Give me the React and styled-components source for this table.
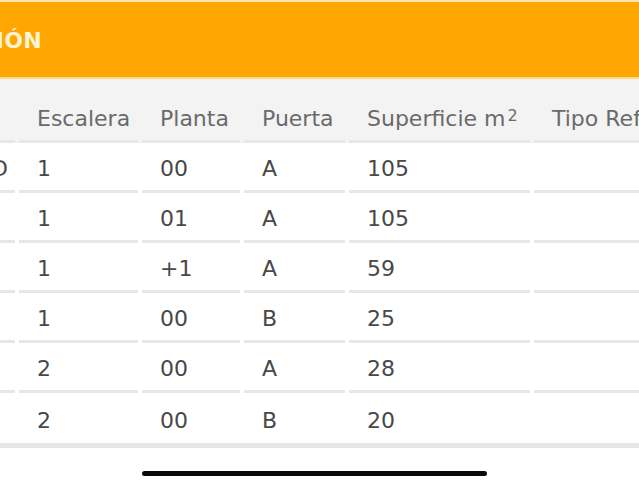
import React from "react";
import styled, { createGlobalStyle } from "styled-components";

const Global = createGlobalStyle`
  html, body {
    margin: 0;
    padding: 0;
    background: #ffffff;
    overflow: hidden;
    width: 639px;
    height: 480px;
  }
  body {
    font-family: "DejaVu Sans", Verdana, sans-serif;
  }
`;

const Page = styled.div`
  width: 639px;
  height: 480px;
  overflow: hidden;
  display: flex;
  flex-direction: column;
  background: #ffffff;
`;

const TitleBar = styled.div`
  height: 79px;
  background: #ffa602;
  border-top: 2px solid #fde6ad;
  border-bottom: 2px solid #fcd98f;
  display: flex;
  align-items: center;
  padding-top: 2px;
  box-sizing: border-box;
  flex-shrink: 0;
`;

const TitleClip = styled.div`
  width: 42px;
  display: flex;
  justify-content: flex-end;
  flex-shrink: 0;
`;

const Title = styled.span`
  font-family: "DejaVu Sans", Verdana, sans-serif;
  font-weight: bold;
  font-size: 22px;
  color: #fff4d2;
  white-space: nowrap;
  letter-spacing: 0.3px;
`;

const Spacer = styled.div`
  height: 9px;
  flex-shrink: 0;
  background: #f1f4f1;
`;

const Table = styled.div`
  display: flex;
  flex-direction: column;
  margin-left: -27px;
  width: 800px;
  border-bottom: 5px solid #e6e6e6;
`;

const cols = "42px 119px 98px 101px 181px 215px";

const Row = styled.div`
  display: grid;
  grid-template-columns: ${cols};
  column-gap: 4px;
  background: ${(p) => (p.$head ? "#f3f3f3" : "#ffffff")};
`;

const Cell = styled.div`
  box-sizing: border-box;
  height: ${(p) => (p.$head ? "55px" : "50px")};
  padding: ${(p) => (p.$head ? "9px 18px 0" : "4px 18px 0")};
  display: flex;
  align-items: center;
  border-bottom: ${(p) => (p.$last ? "none" : "3px solid #e7e7e7")};
  font-size: 22px;
  color: ${(p) => (p.$head ? "#6a6a6a" : "#484848")};
  white-space: nowrap;
  overflow: hidden;
`;

const Sup = styled.sup`
  font-size: 16px;
  line-height: 0;
  position: relative;
  top: -3px;
  margin-left: 2px;
`;

const Footer = styled.div`
  padding-top: 23px;
  padding-left: 142px;
`;

const HomeBar = styled.div`
  width: 345px;
  height: 5px;
  border-radius: 3px;
  background: #0a0a0a;
`;

const rows = [
  ["D", "1", "00", "A", "105", ""],
  ["", "1", "01", "A", "105", ""],
  ["", "1", "+1", "A", "59", ""],
  ["", "1", "00", "B", "25", ""],
  ["", "2", "00", "A", "28", ""],
  ["", "2", "00", "B", "20", ""],
];

export default function App() {
  return (
    <Page>
      <Global />
      <TitleBar>
        <TitleClip>
          <Title>DISTRIBUCIÓN</Title>
        </TitleClip>
      </TitleBar>
      <Spacer />
      <Table>
        <Row $head>
          <Cell $head></Cell>
          <Cell $head>Escalera</Cell>
          <Cell $head>Planta</Cell>
          <Cell $head>Puerta</Cell>
          <Cell $head>
            Superficie m<Sup>2</Sup>
          </Cell>
          <Cell $head>Tipo Reforma</Cell>
        </Row>
        {rows.map((r, i) => (
          <Row key={i}>
            {r.map((v, j) => (
              <Cell key={j} $last={i === rows.length - 1}>
                {v}
              </Cell>
            ))}
          </Row>
        ))}
      </Table>
      <Footer>
        <HomeBar />
      </Footer>
    </Page>
  );
}
